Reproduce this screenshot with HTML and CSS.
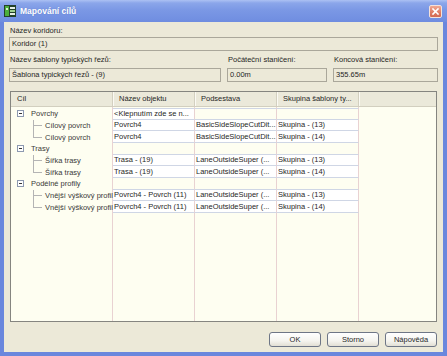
FILE: index.html
```html
<!DOCTYPE html>
<html lang="cs">
<head>
<meta charset="utf-8">
<title>Mapování cílů</title>
<link rel="stylesheet" href="styles.css">
</head>
<body>
<div class="window">
  <div class="titlebar">
    <svg class="appicon" viewBox="0 0 12 12" width="12" height="12">
      <rect width="12" height="12" fill="#23402a"/>
      <rect x="1" y="1" width="4" height="10" fill="#4cae3c"/>
      <rect x="2" y="3" width="2" height="2" fill="#d8f0c8"/>
      <rect x="6" y="2" width="5" height="2" fill="#e6efe6"/>
      <rect x="6" y="5" width="5" height="2" fill="#9fd08f"/>
      <rect x="6" y="8" width="5" height="2" fill="#e6efe6"/>
    </svg>
    <span class="title">Mapování cílů</span>
    <span class="close"><svg viewBox="0 0 11 11" width="11" height="11"><path d="M3 3 L8 8 M8 3 L3 8" stroke="#fff" stroke-width="1.6" stroke-linecap="square"/></svg></span>
  </div>
  <div class="client">
    <div class="lbl first">Název koridoru:</div>
    <div class="field">Koridor (1)</div>
    <div class="row3">
      <div class="grp">
        <div class="lbl">Název šablony typických řezů:</div>
        <div class="field">Šablona typických řezů - (9)</div>
      </div>
      <div class="grp">
        <div class="lbl">Počáteční staničení:</div>
        <div class="field">0.00m</div>
      </div>
      <div class="grp">
        <div class="lbl">Koncová staničení:</div>
        <div class="field">355.65m</div>
      </div>
    </div>
    <div class="grid">
      <div class="ghead">
        <div class="h">Cíl</div>
        <div class="h">Název objektu</div>
        <div class="h">Podsestava</div>
        <div class="h">Skupina šablony ty...</div>
        <div class="h last"></div>
      </div>
      <div class="gbody">
        <div class="c t parent"><span class="pm"></span>Povrchy</div>
        <div class="c v w top">&lt;Klepnutím zde se n...</div>
        <div class="c v top"></div>
        <div class="c v top"></div>

        <div class="c t child"><span class="br"></span>Cílový povrch</div>
        <div class="c v w">Povrch4</div>
        <div class="c v w">BasicSideSlopeCutDit...</div>
        <div class="c v w">Skupina - (13)</div>

        <div class="c t child"><span class="br end"></span>Cílový povrch</div>
        <div class="c v w">Povrch4</div>
        <div class="c v w">BasicSideSlopeCutDit...</div>
        <div class="c v w">Skupina - (14)</div>

        <div class="c t parent"><span class="pm"></span>Trasy</div>
        <div class="c v"></div>
        <div class="c v"></div>
        <div class="c v"></div>

        <div class="c t child"><span class="br"></span>Šířka trasy</div>
        <div class="c v w">Trasa - (19)</div>
        <div class="c v w">LaneOutsideSuper (...</div>
        <div class="c v w">Skupina - (13)</div>

        <div class="c t child"><span class="br end"></span>Šířka trasy</div>
        <div class="c v w">Trasa - (19)</div>
        <div class="c v w">LaneOutsideSuper (...</div>
        <div class="c v w">Skupina - (14)</div>

        <div class="c t parent"><span class="pm"></span>Podélné profily</div>
        <div class="c v"></div>
        <div class="c v"></div>
        <div class="c v"></div>

        <div class="c t child"><span class="br"></span>Vnější výškový profil</div>
        <div class="c v w">Povrch4 - Povrch (11)</div>
        <div class="c v w">LaneOutsideSuper (...</div>
        <div class="c v w">Skupina - (13)</div>

        <div class="c t child"><span class="br end"></span>Vnější výškový profil</div>
        <div class="c v w">Povrch4 - Povrch (11)</div>
        <div class="c v w">LaneOutsideSuper (...</div>
        <div class="c v w">Skupina - (14)</div>
      </div>
    </div>
    <div class="buttons">
      <div class="btn">OK</div>
      <div class="btn">Storno</div>
      <div class="btn">Nápověda</div>
    </div>
  </div>
</div>
</body>
</html>
```

FILE: styles.css
```css
* { box-sizing: border-box; }
html, body { margin: 0; padding: 0; }
body {
  width: 447px;
  height: 356px;
  overflow: hidden;
  font-family: "Liberation Sans", Arial, sans-serif;
  font-size: 7.5px;
  color: #262626;
  background: #6a87dd;
}
.window {
  width: 447px;
  height: 356px;
  display: flex;
  flex-direction: column;
  background: #6a87dd;
}
.titlebar {
  height: 22px;
  flex: none;
  display: flex;
  align-items: center;
  padding: 0 4px;
  background: linear-gradient(#acc1f3 0, #8ba6ea 3px, #7b98e5 45%, #6f8de0 100%);
}
.appicon { flex: none; display: block; }
.title {
  margin-left: 4px;
  color: #fff;
  font-weight: bold;
  font-size: 8.5px;
  text-shadow: 0 0 1px rgba(40, 60, 140, 0.35);
}
.close {
  margin-left: auto;
  margin-right: 1px;
  width: 13px;
  height: 13px;
  border: 1px solid #f4e2dc;
  border-radius: 2px;
  background: linear-gradient(#efa893, #de7b62 60%, #d26a52);
  display: flex;
  align-items: center;
  justify-content: center;
}
.close svg { display: block; }
.client {
  flex: 1;
  margin: 0 4px 4px;
  background: #ece9d8;
  padding: 0 5px;
  display: flex;
  flex-direction: column;
}
.lbl {
  height: 10px;
  line-height: 10px;
  padding-left: 1px;
  white-space: nowrap;
}
.lbl.first { margin-top: 4px; }
.field {
  height: 14px;
  margin-top: 1px;
  border: 1px solid #aaa79a;
  background: #ece9d8;
  padding: 0 2px;
  line-height: 12px;
  white-space: nowrap;
  overflow: hidden;
}
.row3 {
  margin-top: 4px;
  display: grid;
  grid-template-columns: 212px 100px 1fr;
  column-gap: 6px;
}
.row3 .field { margin-top: 3px; }
.grid {
  margin: 9px 1px 0;
  height: 231px;
  border: 1px solid #858580;
  display: flex;
  flex-direction: column;
  background: #fefef1;
}
.ghead {
  height: 15px;
  flex: none;
  display: grid;
  grid-template-columns: 102px 82px 82px 82px 1fr;
  background: #ebe9da;
  border-bottom: 1px solid #d2cfbf;
}
.h {
  padding-left: 6px;
  line-height: 14px;
  border-right: 1px solid #d3d0c0;
  box-shadow: inset 1px 0 0 #fbfaf4;
  white-space: nowrap;
  overflow: hidden;
}
.h:first-child { box-shadow: none; }
.h.last { border-right: none; }
.gbody {
  flex: 1;
  padding-top: 1px;
  display: grid;
  grid-template-columns: 102px 82px 82px 82px;
  grid-auto-rows: 11.67px;
  align-content: start;
  background-color: #fefef1;
  background-image: linear-gradient(to right,
    transparent 101px, #e9d2d2 101px, #e9d2d2 102px,
    transparent 102px, transparent 183px, #e9d2d2 183px, #e9d2d2 184px,
    transparent 184px, transparent 265px, #e9d2d2 265px, #e9d2d2 266px,
    transparent 266px, transparent 347px, #e9d2d2 347px, #e9d2d2 348px,
    transparent 348px);
}
.c {
  display: flex;
  align-items: center;
  white-space: nowrap;
  overflow: hidden;
}
.v {
  padding: 0 1px;
  border-right: 1px solid #e9d2d2;
  border-bottom: 1px solid #cfd6e5;
}
.v.top { border-top: 1px solid #cfd6e5; }
.v.w { background: #fff; }
.t { color: #3a3a3a; }
.t.parent { padding-left: 6px; }
.pm {
  flex: none;
  width: 7px;
  height: 7px;
  margin-right: 7px;
  border: 1px solid #8d99b0;
  background: linear-gradient(#333, #333) center / 3px 1px no-repeat, #fff;
}
.t.child { padding-left: 22px; align-items: center; line-height: 11px; }
.br {
  flex: none;
  align-self: stretch;
  width: 9px;
  margin-right: 3px;
  background:
    linear-gradient(#b4b4b4, #b4b4b4) left top / 1px 100% no-repeat,
    linear-gradient(#b4b4b4, #b4b4b4) left center / 100% 1px no-repeat;
}
.br.end {
  background:
    linear-gradient(#b4b4b4, #b4b4b4) left top / 1px 50% no-repeat,
    linear-gradient(#b4b4b4, #b4b4b4) left center / 100% 1px no-repeat;
}
.buttons {
  margin-top: 10px;
  margin-right: 1px;
  display: flex;
  justify-content: flex-end;
  gap: 6px;
}
.btn {
  width: 52px;
  height: 15px;
  border: 1px solid #6e7686;
  border-radius: 3px;
  background: linear-gradient(#ffffff, #f5f4ef 60%, #e2dfd4);
  text-align: center;
  line-height: 13px;
}
```
